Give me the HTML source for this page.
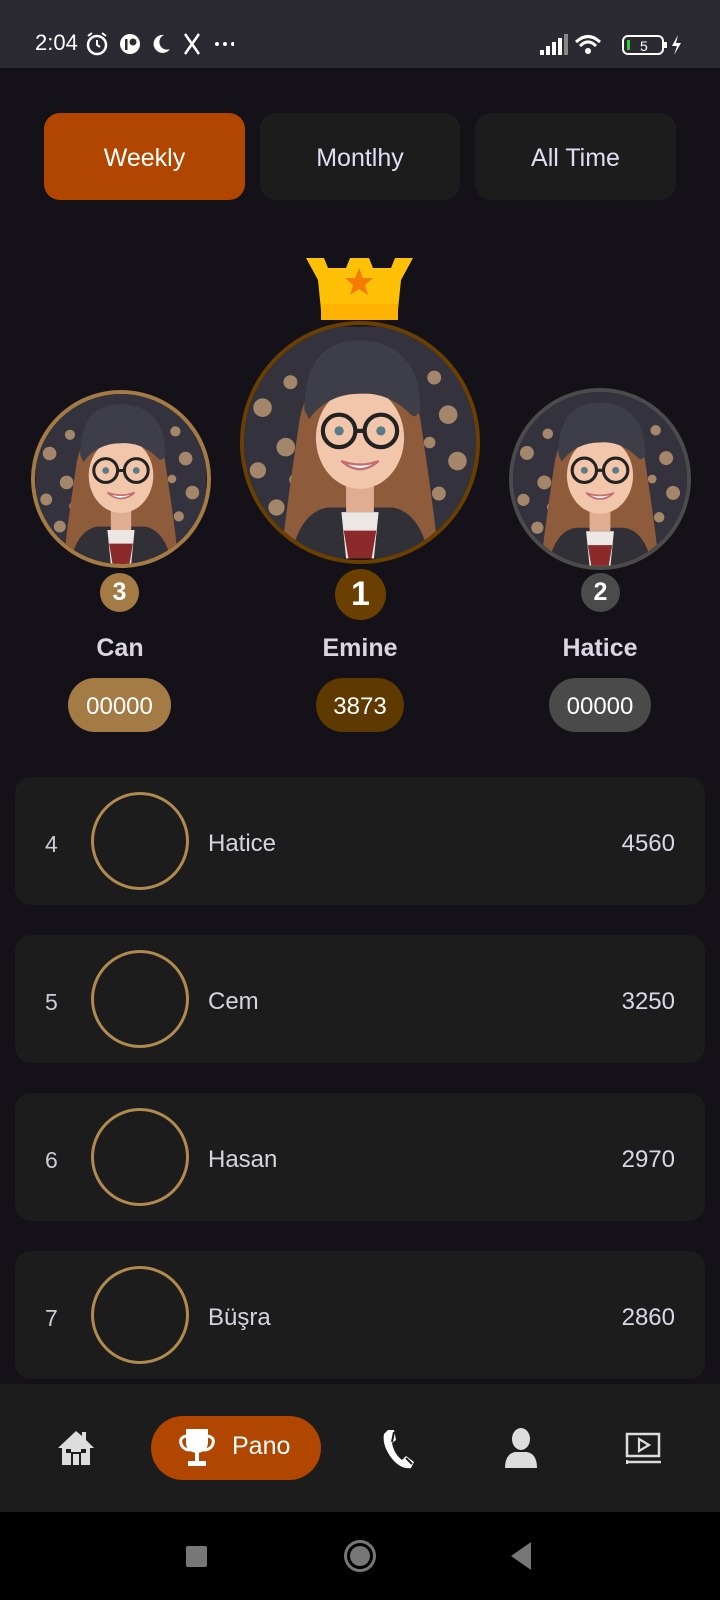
<!DOCTYPE html>
<html><head><meta charset="utf-8">
<style>
*{margin:0;padding:0;box-sizing:border-box}
body{width:720px;height:1600px;background:#141218;font-family:"Liberation Sans",sans-serif;position:relative;overflow:hidden;color:#e4e0ec}
.abs{position:absolute}
.status{left:0;top:0;width:720px;height:68px;background:#2b2a33}
.tab{top:113px;height:87px;padding-top:3px;border-radius:16px;background:#1c1c1c;display:flex;align-items:center;justify-content:center;font-size:25px;color:#e2dcf2}
.tab.on{background:#b04600;color:#fff}
.name{font-weight:bold;font-size:25px;color:#dcd6e4;text-align:center;width:200px}
.pill{top:678px;height:54px;padding-top:3px;border-radius:27px;display:flex;align-items:center;justify-content:center;font-size:24px;color:#fff}
.badge{border-radius:50%;display:flex;align-items:center;justify-content:center;color:#fff;font-weight:bold}
.item{left:15px;width:690px;height:128px;background:#1c1c1c;border-radius:16px}
.item .n{position:absolute;left:30px;top:3px;line-height:128px;font-size:23px;color:#cfcbd6}
.item .c{position:absolute;left:76px;top:15px;width:98px;height:98px;border-radius:50%;border:3px solid #b08a4f}
.item .nm{position:absolute;left:193px;top:3px;line-height:128px;font-size:24px;color:#d8d3e0}
.item .s{position:absolute;right:30px;top:3px;line-height:128px;font-size:24px;color:#dcd6e8}
.av{border-radius:50%;overflow:hidden}
</style></head><body>
<svg width="0" height="0" style="position:absolute">
<symbol id="girl" viewBox="0 0 100 100">
<rect width="100" height="100" fill="#34333d"/>
<g fill="#f0c08a" opacity=".6"><circle cx="8" cy="35" r="4"/><circle cx="18" cy="52" r="4"/><circle cx="6" cy="62" r="3.5"/><circle cx="88" cy="38" r="4"/><circle cx="92" cy="58" r="4"/><circle cx="84" cy="72" r="3"/><circle cx="14" cy="78" r="3.5"/><circle cx="20" cy="24" r="3"/><circle cx="82" cy="22" r="3"/><circle cx="22" cy="66" r="2.5"/><circle cx="80" cy="50" r="2.5"/></g>
<path d="M24 40 Q18 80 16 100 L84 100 Q82 80 76 40 Q72 18 50 18 Q28 18 24 40Z" fill="#8e5b3b"/>
<path d="M20 100 Q24 80 36 78 L64 78 Q76 80 80 100Z" fill="#303036"/>
<path d="M42 80 L58 80 L56 100 L44 100Z" fill="#ece6e4"/>
<path d="M43 88 L57 88 L55 100 L45 100Z" fill="#8a2a2a"/>
<rect x="44" y="64" width="12" height="16" fill="#e0ad92"/>
<ellipse cx="50" cy="48" rx="19" ry="22" fill="#f2c6ab"/>
<path d="M26 36 Q26 6 50 6 Q76 7 76 36 Q74 40 72 38 Q62 28 50 29 Q36 29 28 40Z" fill="#3d3e48"/>
<g fill="none" stroke="#222" stroke-width="1.8"><circle cx="41" cy="45" r="7"/><circle cx="59" cy="45" r="7"/><path d="M48 45 L52 45"/></g>
<circle cx="41" cy="45" r="2" fill="#5a7a8a"/><circle cx="59" cy="45" r="2" fill="#5a7a8a"/>
<path d="M42 58 Q50 65 58 58 Q50 61 42 58Z" fill="#fff" stroke="#c07070" stroke-width="1"/>
</symbol>
</svg>

<div class="abs status"></div>
<div class="abs" style="left:35px;top:30px;font-size:22px;color:#fff">2:04</div>
<svg class="abs" style="left:84px;top:31px" width="150" height="26" viewBox="0 0 150 26">
<circle cx="13" cy="14" r="9" fill="none" stroke="#fff" stroke-width="2.5"/><path d="M13 9v5l3 2" stroke="#fff" stroke-width="2" fill="none"/><path d="M4 5l4-3M22 5l-4-3" stroke="#fff" stroke-width="2"/>
<circle cx="46" cy="13" r="10" fill="#fff"/><circle cx="49" cy="11" r="3.5" fill="#2b2a33"/><rect x="41" y="8" width="2.5" height="11" fill="#2b2a33"/>
<path d="M80 4a9 9 0 1 0 6 14a7 7 0 1 1 -6 -14z" fill="#fff"/>
<path d="M101 3 L115 23 M115 3 L101 23" stroke="#fff" stroke-width="2.5"/>
<circle cx="133" cy="13" r="2" fill="#fff"/><circle cx="141" cy="13" r="2" fill="#fff"/><circle cx="149" cy="13" r="2" fill="#fff"/>
</svg>
<svg class="abs" style="left:540px;top:32px" width="150" height="26" viewBox="0 0 150 26">
<rect x="0" y="18" width="4" height="5" fill="#fff"/><rect x="6" y="14" width="4" height="9" fill="#fff"/><rect x="12" y="10" width="4" height="13" fill="#fff"/><rect x="18" y="6" width="4" height="17" fill="#fff"/><rect x="24" y="2" width="4" height="21" fill="#888"/>
<path d="M36 10 Q48 -1 60 10" stroke="#fff" stroke-width="3" fill="none"/><path d="M40 14 Q48 6 56 14" stroke="#fff" stroke-width="3" fill="none"/><circle cx="48" cy="19" r="3" fill="#fff"/>
<rect x="83" y="4" width="40" height="18" rx="5" fill="none" stroke="#fff" stroke-width="2"/><rect x="87" y="8" width="3" height="10" fill="#3c3"/><text x="100" y="19" font-size="14" fill="#fff">5</text><rect x="124" y="10" width="3" height="6" fill="#fff"/>
<path d="M138 3 L132 14 L137 14 L134 23 L141 11 L136 11Z" fill="#fff"/>
</svg>

<div class="abs tab on" style="left:44px;width:201px">Weekly</div>
<div class="abs tab" style="left:260px;width:200px">Montlhy</div>
<div class="abs tab" style="left:475px;width:201px">All Time</div>

<svg class="abs" style="left:306px;top:258px" width="107" height="64" viewBox="0 0 107 64">
<path d="M0 0 L18 0 L22 10 L40 10 L44 0 L63 0 L67 10 L85 10 L89 0 L107 0 L95 22 L91 62 L16 62 L12 22Z" fill="#ffc107"/>
<rect x="15" y="46" width="77" height="16" fill="#ffb300"/>
<path d="M53 10 L57 20 L67 20 L59 27 L62 37 L53 31 L44 37 L47 27 L39 20 L49 20Z" fill="#f57c00"/>
</svg>

<div class="abs av" style="left:31px;top:390px;width:180px;height:178px;border:4px solid #a57b45"><svg width="100%" height="100%"><use href="#girl"/></svg></div>
<div class="abs av" style="left:240px;top:321px;width:240px;height:243px;border:4px solid #6a3f00"><svg width="100%" height="100%"><use href="#girl"/></svg></div>
<div class="abs av" style="left:509px;top:388px;width:182px;height:182px;border:4px solid #4b4b4b"><svg width="100%" height="100%"><use href="#girl"/></svg></div>

<div class="abs badge" style="left:100px;top:573px;width:39px;height:39px;background:#a57b45;font-size:25px">3</div>
<div class="abs badge" style="left:335px;top:569px;width:51px;height:51px;background:#6a3f00;font-size:34px">1</div>
<div class="abs badge" style="left:581px;top:573px;width:39px;height:39px;background:#4b4b4b;font-size:25px">2</div>

<div class="abs name" style="left:20px;top:634px">Can</div>
<div class="abs name" style="left:260px;top:634px">Emine</div>
<div class="abs name" style="left:500px;top:634px">Hatice</div>

<div class="abs pill" style="left:68px;width:103px;background:#a57b45">00000</div>
<div class="abs pill" style="left:316px;width:88px;background:#5e3a00">3873</div>
<div class="abs pill" style="left:549px;width:102px;background:#4a4a4a">00000</div>

<div class="abs item" style="top:777px"><span class="n">4</span><div class="c"></div><span class="nm">Hatice</span><span class="s">4560</span></div>
<div class="abs item" style="top:935px"><span class="n">5</span><div class="c"></div><span class="nm">Cem</span><span class="s">3250</span></div>
<div class="abs item" style="top:1093px"><span class="n">6</span><div class="c"></div><span class="nm">Hasan</span><span class="s">2970</span></div>
<div class="abs item" style="top:1251px"><span class="n">7</span><div class="c"></div><span class="nm">Büşra</span><span class="s">2860</span></div>

<div class="abs" style="left:0;top:1384px;width:720px;height:128px;background:#1c1c1c"></div>
<svg class="abs" style="left:56px;top:1428px" width="40" height="40" viewBox="0 0 40 40">
<path d="M20 3 L2 20 L6 20 L6 37 L34 37 L34 20 L38 20 L30 12 L30 4 L26 4 L26 8Z" fill="#ddd"/><rect x="15" y="24" width="10" height="13" fill="#1c1c1c"/><rect x="17" y="26" width="6" height="11" fill="#ddd"/><rect x="10" y="21" width="5" height="4" fill="#1c1c1c"/><rect x="25" y="21" width="5" height="4" fill="#1c1c1c"/>
</svg>
<div class="abs" style="left:151px;top:1416px;width:170px;height:64px;border-radius:32px;background:#b04600"></div>
<svg class="abs" style="left:178px;top:1428px" width="38" height="40" viewBox="0 0 38 40">
<path d="M8 1 L30 1 L30 14 Q30 24 19 25 Q8 24 8 14Z" fill="#fff"/><path d="M8 8 Q0 10 4 18 Q7 22 12 22" stroke="#fff" stroke-width="3" fill="none"/><path d="M30 8 Q38 10 34 18 Q31 22 26 22" stroke="#fff" stroke-width="3" fill="none"/><rect x="17" y="24" width="4" height="10" fill="#fff"/><rect x="10" y="33" width="18" height="5" fill="#fff"/>
</svg>
<div class="abs" style="left:232px;top:1432px;font-size:25px;color:#fff">Pano</div>
<svg class="abs" style="left:380px;top:1428px" width="36" height="42" viewBox="0 0 36 42">
<path d="M8 2 L14 2 L16 12 L12 15 Q14 26 22 32 L26 28 L34 34 L31 40 Q20 42 10 28 Q2 16 4 6Z" fill="#fff"/><path d="M14 4 L12 14 M26 30 L32 36" stroke="#1c1c1c" stroke-width="2"/>
</svg>
<svg class="abs" style="left:503px;top:1428px" width="36" height="40" viewBox="0 0 36 40">
<ellipse cx="18" cy="11" rx="9" ry="11" fill="#ddd"/><path d="M2 40 Q2 26 12 24 L24 24 Q34 26 34 40Z" fill="#ddd"/>
</svg>
<svg class="abs" style="left:625px;top:1432px" width="38" height="34" viewBox="0 0 38 34">
<rect x="2" y="2" width="32" height="22" fill="none" stroke="#ddd" stroke-width="2.5"/><path d="M14 7 L24 13 L14 19Z" fill="none" stroke="#ddd" stroke-width="2.2"/><path d="M2 30 L36 30" stroke="#ddd" stroke-width="2.5"/><path d="M2 28 L2 32" stroke="#ddd" stroke-width="2"/>
</svg>

<div class="abs" style="left:0;top:1512px;width:720px;height:88px;background:#000"></div>
<div class="abs" style="left:186px;top:1546px;width:21px;height:21px;background:#777;border-radius:2px"></div>
<div class="abs" style="left:344px;top:1540px;width:32px;height:32px;border-radius:50%;border:3px solid #777;padding:3px"><div style="width:100%;height:100%;border-radius:50%;background:#777"></div></div>
<svg class="abs" style="left:509px;top:1541px" width="24" height="30" viewBox="0 0 24 30"><path d="M22 1 L22 29 L2 15Z" fill="#777"/></svg>
</body></html>
